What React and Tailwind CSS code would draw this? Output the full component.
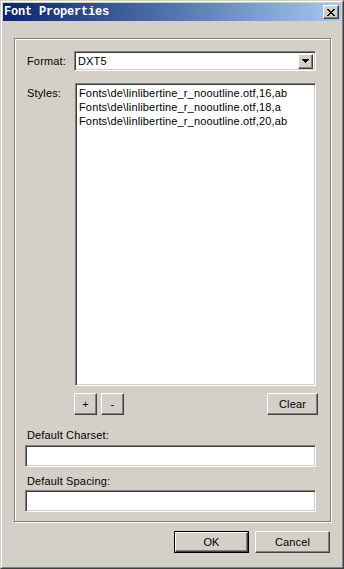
import React from 'react';

// classic 3D borders
const raised =
  "border border-t-white border-l-white border-r-[#404040] border-b-[#404040] shadow-[inset_-1px_-1px_0_#808080]";
const sunken =
  "border border-t-[#808080] border-l-[#808080] border-r-white border-b-white shadow-[inset_1px_1px_0_#404040,inset_-1px_-1px_0_#d4d0c8]";

const Button = ({ children, className = "" }) => (
  <div className={`flex items-center justify-center bg-[#d4d0c8] text-black text-[11px] ${raised} ${className}`}>
    {children}
  </div>
);

const styles = [
  "Fonts\\de\\linlibertine_r_nooutline.otf,16,ab",
  "Fonts\\de\\linlibertine_r_nooutline.otf,18,a",
  "Fonts\\de\\linlibertine_r_nooutline.otf,20,ab",
];

export default function App() {
  return (
    <div
      className="w-[344px] h-[569px] bg-[#d4d0c8] border border-t-[#d4d0c8] border-l-[#d4d0c8] border-r-[#404040] border-b-[#404040] tracking-[0.15px]"
      style={{ fontFamily: '"Liberation Sans", Arial, sans-serif' }}
    >
      <div className="h-full border border-t-white border-l-white border-r-[#808080] border-b-[#808080] p-px flex flex-col">
        {/* Title bar */}
        <div className="h-[18px] flex items-center justify-between pl-[1px] pr-[2px] bg-gradient-to-r from-[#0a246a] to-[#a6caf0]">
          <span
            className="text-white font-bold text-[12px] leading-none tracking-[-0.2px]"
            style={{ fontFamily: '"Liberation Mono", "DejaVu Sans Mono", monospace' }}
          >
            Font Properties
          </span>
          <div className={`w-[16px] h-[14px] bg-[#d4d0c8] flex items-center justify-center ${raised}`}>
            <svg width="8" height="7" viewBox="0 0 8 7">
              <path d="M0 0h2v1h1v1h2v-1h1v-1h2v1h-1v1h-1v1h-1v1h1v1h1v1h1v1h-2v-1h-1v-1h-2v1h-1v1h-2v-1h1v-1h1v-1h1v-1h-1v-1h-1v-1h-1z" fill="#000" />
            </svg>
          </div>
        </div>

        {/* Body */}
        <div className="flex-1 flex flex-col pl-[11px] pr-[10px] pt-[17px]">
          {/* Group box */}
          <div className="w-[317px] h-[484px] border border-[#808080] shadow-[inset_1px_1px_0_white,1px_1px_0_white] pl-[10px] pr-[14px] pt-[12px] flex flex-col text-[11px] text-black">
            <div className="flex items-center h-[20px]">
              <span className="w-[49px] pl-[2px]">Format:</span>
              <div className={`flex-1 h-[20px] bg-white flex items-center justify-between pl-[3px] pr-[2px] ${sunken}`}>
                <span>DXT5</span>
                <div className={`w-[15px] h-[15px] bg-[#d4d0c8] flex items-center justify-center ${raised}`}>
                  <svg width="7" height="4" viewBox="0 0 7 4">
                    <path d="M0 0h7v1h-1v1h-1v1h-1v1h-1v-1h-1v-1h-1v-1h-1z" fill="#000" />
                  </svg>
                </div>
              </div>
            </div>

            <div className="flex mt-[12px]">
              <span className="w-[50px] pl-[2px] pt-[2px]">Styles:</span>
              <div className={`flex-1 h-[303px] bg-white pl-[3px] pt-[2px] leading-[14px] ${sunken}`}>
                {styles.map((s) => (
                  <div key={s}>{s}</div>
                ))}
              </div>
            </div>

            <div className="flex items-center mt-[7px] pl-[49px] gap-[4px]">
              <Button className="w-[23px] h-[22px]">+</Button>
              <Button className="w-[23px] h-[22px]">-</Button>
              <Button className="w-[51px] h-[22px] ml-auto mr-[-2px]">Clear</Button>
            </div>

            <div className="mt-[14px] pl-[2px] leading-[13px]">Default Charset:</div>
            <div className={`mt-[3px] h-[22px] bg-white ${sunken}`} />
            <div className="mt-[8px] pl-[2px] leading-[13px]">Default Spacing:</div>
            <div className={`mt-[2px] h-[22px] bg-white ${sunken}`} />
          </div>

          {/* Dialog buttons */}
          <div className="flex justify-end gap-[6px] mt-[9px] pr-[1px]">
            <div className="border border-black">
              <Button className="w-[73px] h-[20px]">OK</Button>
            </div>
            <Button className="w-[75px] h-[22px]">Cancel</Button>
          </div>
        </div>
      </div>
    </div>
  );
}
